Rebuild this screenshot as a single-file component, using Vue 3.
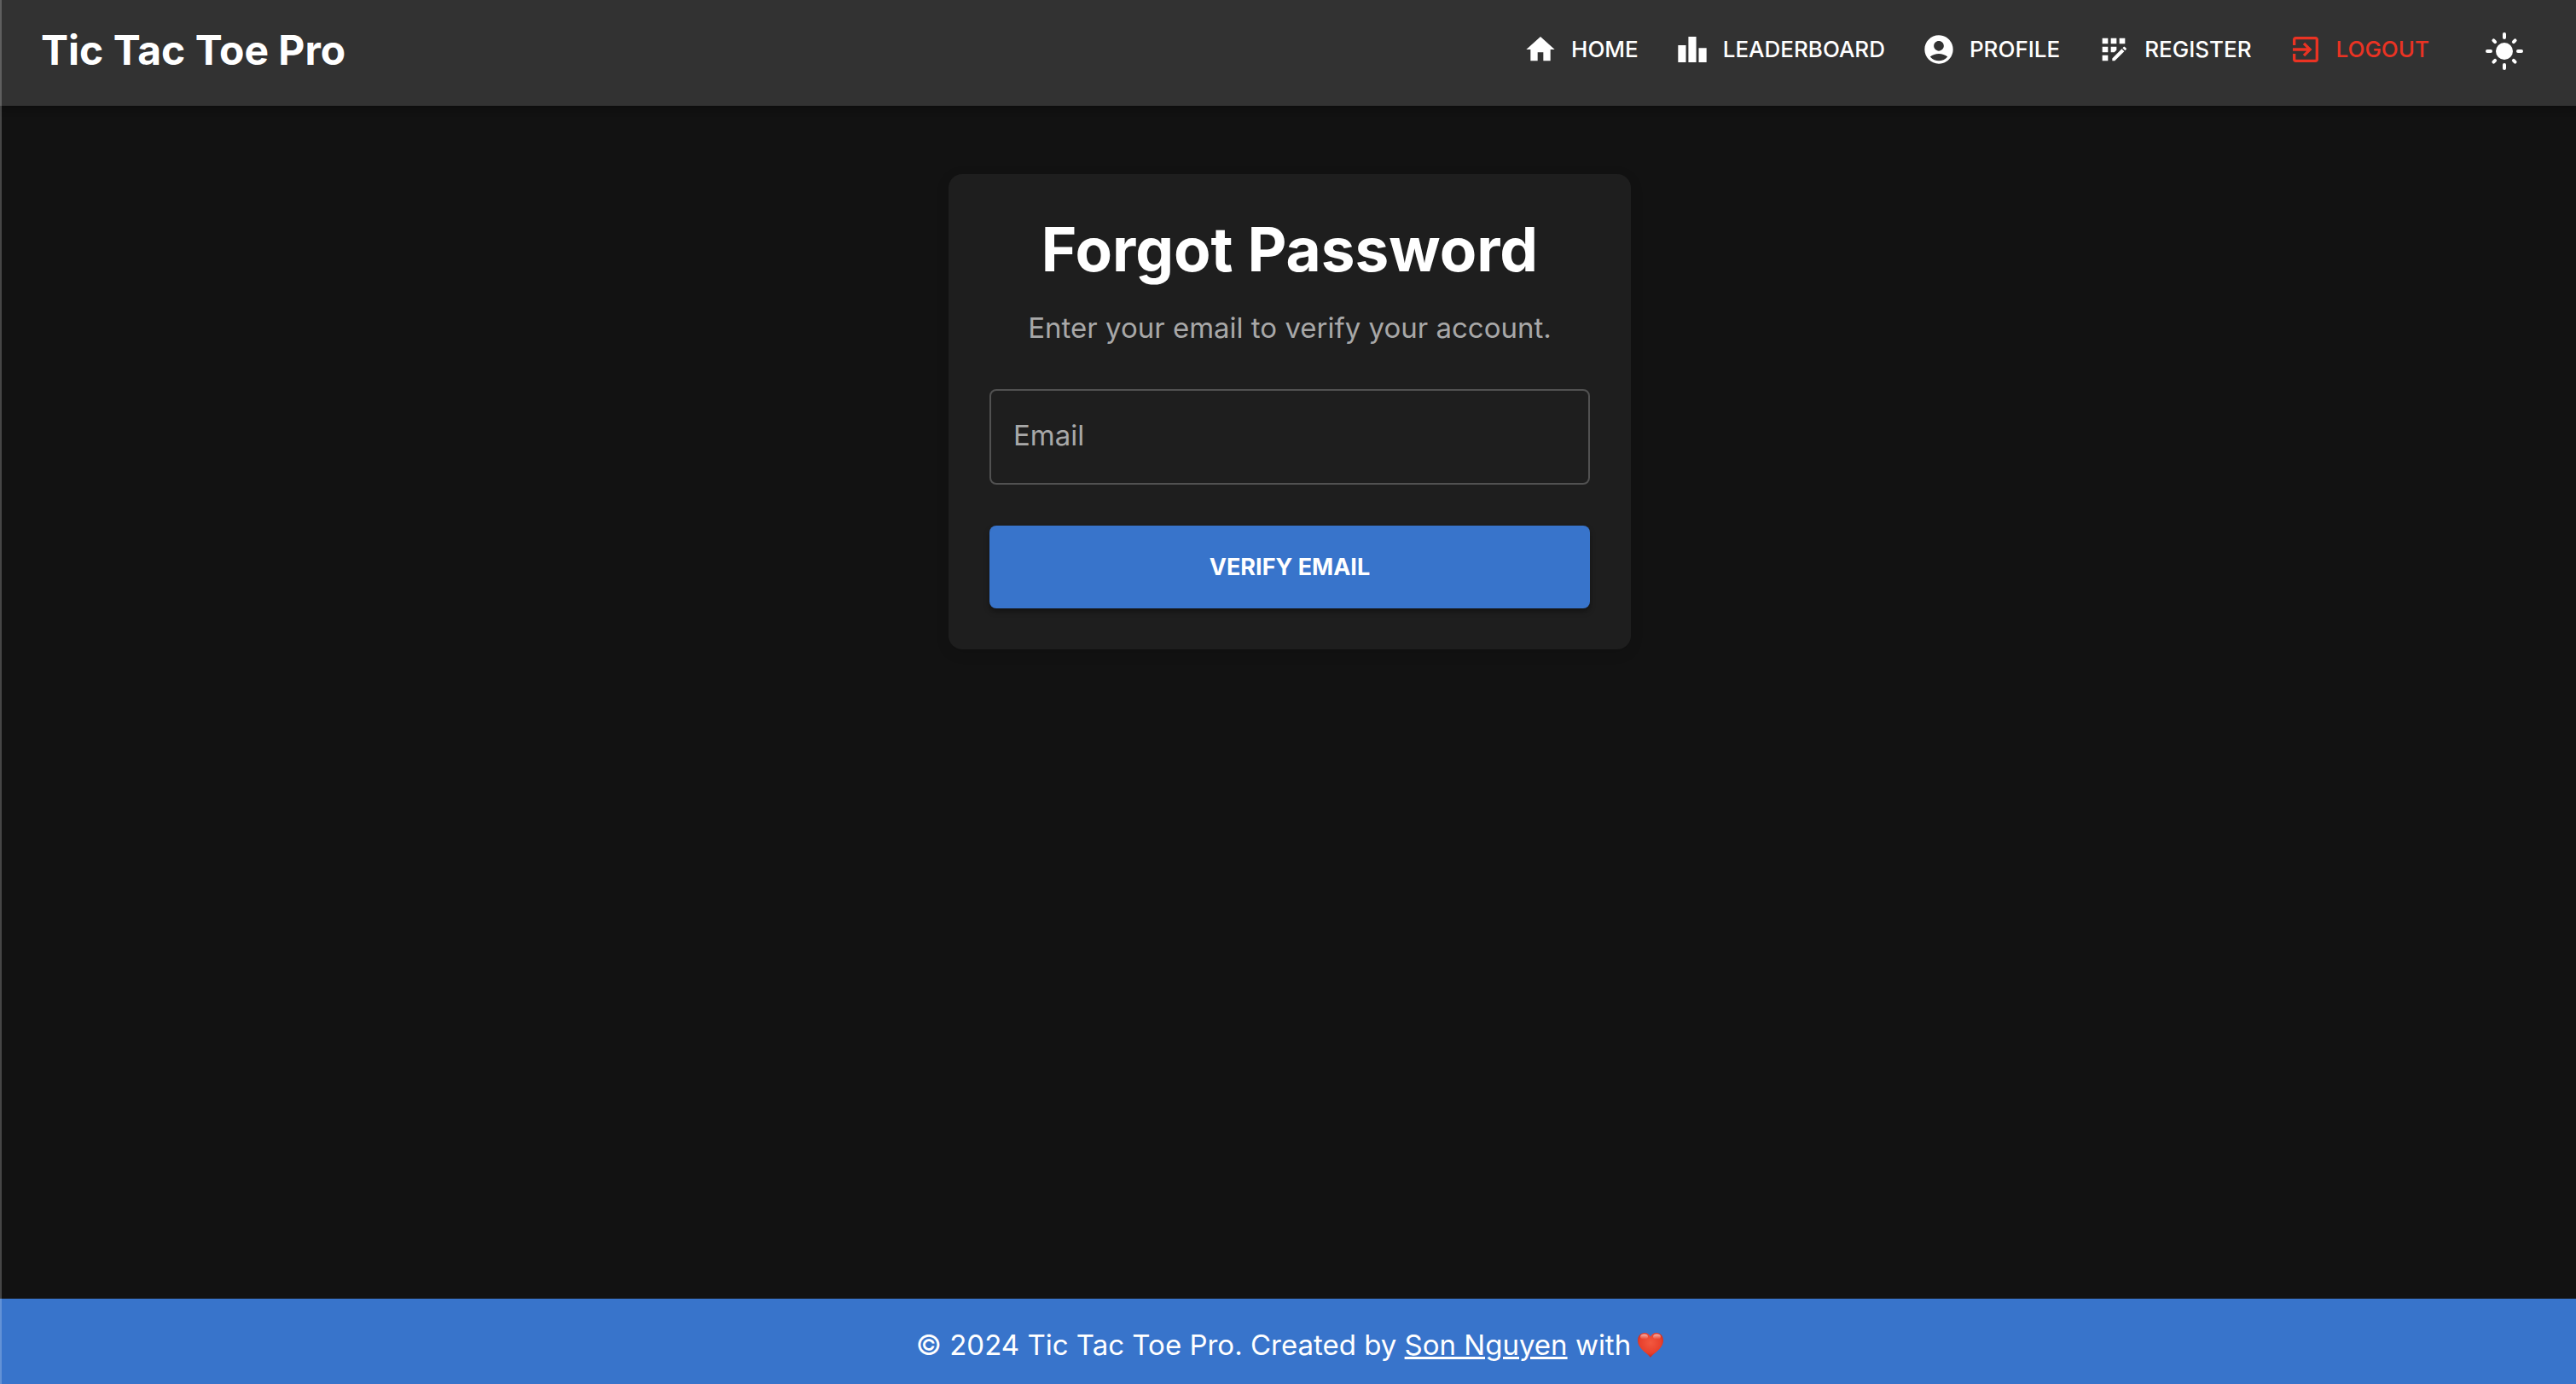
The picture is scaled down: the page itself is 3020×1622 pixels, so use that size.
<script setup>
import { ref } from 'vue'

const email = ref('')

const links = [
  { label: 'Home', path: 'M10 20v-6h4v6h5v-8h3L12 3 2 12h3v8z' },
  { label: 'Leaderboard', path: 'M7.5 21H2V9h5.5v12zm7.25-18h-5.5v18h5.5V3zM22 11h-5.5v10H22V11z' },
  {
    label: 'Profile',
    path: 'M12 2C6.48 2 2 6.48 2 12s4.48 10 10 10 10-4.48 10-10S17.52 2 12 2zm0 4c1.93 0 3.5 1.57 3.5 3.5S13.93 13 12 13s-3.5-1.57-3.5-3.5S10.07 6 12 6zm0 14c-2.03 0-4.43-.82-6.14-2.88C7.55 15.8 9.68 15 12 15s4.45.8 6.14 2.12C16.43 19.18 14.03 20 12 20z',
  },
  {
    label: 'Register',
    path: 'M10 4h4v4h-4zM4 16h4v4H4zM4 10h4v4H4zM4 4h4v4H4zM14 12.42V10h-4v4h2.42zM20.88 11.29l-1.17-1.17c-.16-.16-.42-.16-.58 0l-.88.88L20 12.75l.88-.88c.16-.16.16-.42 0-.58zM11 18.25V20h1.75l6.67-6.67-1.75-1.75zM16 4h4v4h-4z',
  },
  {
    label: 'Logout',
    danger: true,
    path: 'M10.09 15.59 11.5 17l5-5-5-5-1.41 1.41L12.67 11H3v2h9.67l-2.58 2.59zM19 3H5c-1.11 0-2 .9-2 2v4h2V5h14v14H5v-4H3v4c0 1.1.89 2 2 2h14c1.1 0 2-.9 2-2V5c0-1.1-.9-2-2-2z',
  },
]

const rays = [0, 45, 90, 135, 180, 225, 270, 315]
</script>

<template>
  <div class="page">
    <header class="bar">
      <div class="brand">Tic Tac Toe Pro</div>
      <nav class="nav">
        <a v-for="link in links" :key="link.label" href="#" class="link" :class="{ danger: link.danger }">
          <svg class="icon" viewBox="0 0 24 24" aria-hidden="true"><path :d="link.path" /></svg>
          <span>{{ link.label }}</span>
        </a>
      </nav>
      <button class="theme" type="button" aria-label="Toggle theme">
        <svg viewBox="0 0 24 24" aria-hidden="true">
          <circle cx="12" cy="12" r="5" />
          <rect
            v-for="a in rays"
            :key="a"
            x="11"
            :y="a % 90 ? 2.1 : 1"
            width="2"
            :height="a % 90 ? 3.2 : 4"
            rx="1"
            :transform="`rotate(${a} 12 12)`"
          />
        </svg>
      </button>
    </header>

    <main class="main">
      <form class="card" @submit.prevent>
        <h1>Forgot Password</h1>
        <p class="hint">Enter your email to verify your account.</p>
        <input v-model="email" class="field" type="email" placeholder="Email" aria-label="Email" />
        <button class="submit" type="submit">Verify Email</button>
      </form>
    </main>

    <footer class="footer">
      <p>© 2024 Tic Tac Toe Pro. Created by <a href="#">Son Nguyen</a> with</p>
      <svg class="heart" viewBox="0 0 30 29" role="img" aria-label="love">
        <defs>
          <radialGradient id="heart-fill" cx="0.5" cy="0.4" r="0.65">
            <stop offset="0" stop-color="#f2583f" />
            <stop offset="0.65" stop-color="#e8402c" />
            <stop offset="1" stop-color="#b3201a" />
          </radialGradient>
          <linearGradient id="heart-shine" x1="0" y1="0" x2="0" y2="1">
            <stop offset="0" stop-color="#fff" stop-opacity="0.6" />
            <stop offset="1" stop-color="#fff" stop-opacity="0" />
          </linearGradient>
        </defs>
        <path
          fill="url(#heart-fill)"
          d="M15 29C13 25 0 19 0 9C0 3.500 3.500 0 8 0C11 0 13.800 1.800 15 4.500C16.200 1.800 19 0 22 0C26.500 0 30 3.500 30 9C30 19 17 25 15 29Z"
        />
        <ellipse cx="7.500" cy="4.500" rx="4.500" ry="3" fill="url(#heart-shine)" />
        <ellipse cx="22.500" cy="4.500" rx="4.500" ry="3" fill="url(#heart-shine)" />
      </svg>
    </footer>
  </div>
</template>

<style>
body {
  margin: 0;
  background: #121212;
}
</style>

<style scoped>
.page {
  position: relative;
  display: flex;
  flex-direction: column;
  min-height: 100vh;
  font-family: Inter, "Noto Sans", sans-serif;
  color: #fff;
}

/* thin light edge along the left side of the window */
.page::after {
  content: "";
  position: absolute;
  inset: 0 auto 0 0;
  width: 2px;
  background: rgba(255, 255, 255, 0.22);
}

.bar {
  display: flex;
  align-items: center;
  height: 120px;
  padding: 0 48px 4px;
  background: #323232;
  box-shadow: 0 4px 8px rgba(0, 0, 0, 0.3);
}

.brand {
  flex: 1;
  padding-bottom: 4px;
  font-size: 48px;
  font-weight: 700;
}

.nav {
  display: flex;
  gap: 43px;
  margin-right: 52px;
  padding-bottom: 4px;
}

.link {
  display: flex;
  align-items: center;
  gap: 16px;
  font-size: 26px;
  font-weight: 500;
  line-height: 40px;
  text-transform: uppercase;
  text-decoration: none;
  color: #fff;
}

.link.danger {
  color: #ea3323;
}

.icon {
  width: 40px;
  height: 40px;
  fill: currentColor;
}

.theme {
  width: 72px;
  height: 72px;
  padding: 12px;
  border: 0;
  border-radius: 50%;
  background: none;
  color: inherit;
}

.theme svg {
  display: block;
  width: 48px;
  height: 48px;
  fill: currentColor;
}

.main {
  flex: 1;
  padding: 80px 32px 80px 36px;
}

.card {
  display: flex;
  flex-direction: column;
  box-sizing: border-box;
  width: 100%;
  max-width: 800px;
  margin: 0 auto;
  padding: 48px;
  border-radius: 16px;
  background: #1e1e1e;
  box-shadow: 0 4px 16px rgba(0, 0, 0, 0.12);
  text-align: center;
}

h1 {
  margin: 0 0 22px;
  font-size: 71px;
  font-weight: 700;
  line-height: 80px;
}

.hint {
  margin: 0 0 42px;
  font-size: 33px;
  line-height: 60px;
  color: #a8a8a8;
}

.field {
  box-sizing: border-box;
  height: 112px;
  margin-bottom: 48px;
  padding: 0 26px 4px;
  border: 2px solid #515151;
  border-radius: 8px;
  background: none;
  font: inherit;
  font-size: 33px;
  color: #fff;
}

.field::placeholder {
  color: #a8a8a8;
  opacity: 1;
}

.submit {
  height: 97px;
  border: 0;
  border-radius: 8px;
  background: #3874cb;
  box-shadow: 0 4px 6px rgba(0, 0, 0, 0.35);
  font: inherit;
  font-size: 27px;
  font-weight: 700;
  text-transform: uppercase;
  color: #fff;
}

.footer {
  display: flex;
  align-items: center;
  justify-content: center;
  gap: 8px;
  height: 100px;
  padding: 8px 0 0 4px;
  box-sizing: border-box;
  background: #3874cb;
  font-size: 33px;
}

.footer p {
  margin: 0;
}

.footer a {
  color: inherit;
  text-decoration-thickness: 3px;
  text-underline-offset: 2px;
}

.heart {
  width: 30px;
  height: 29px;
}
</style>
